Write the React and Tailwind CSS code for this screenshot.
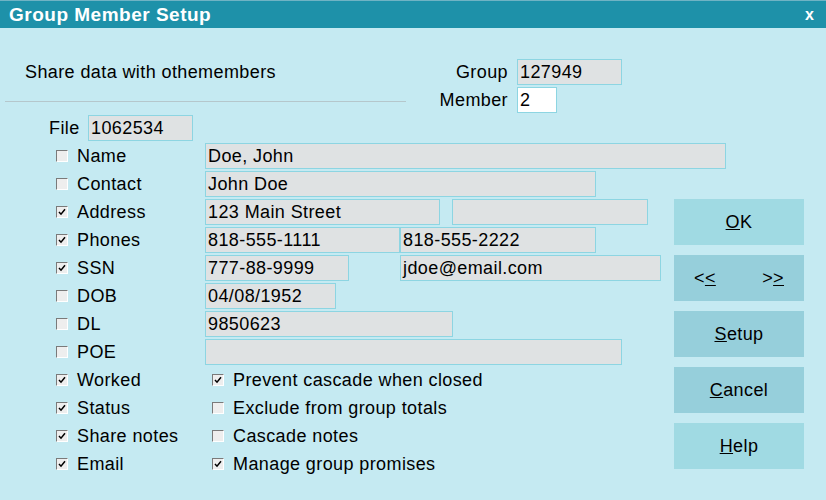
import React from "react";

const font = { fontFamily: '"Liberation Sans", Arial, sans-serif' };

function Check({ on }) {
  return (
    <span className="inline-flex items-center justify-center h-[12px] w-[12px] shrink-0 border-t border-l border-t-[#7a7a7a] border-l-[#7a7a7a] border-b border-r border-b-white border-r-white bg-[#eeeeee]">
      {on && (
        <svg width="10" height="10" viewBox="0 0 10 10">
          <path d="M2 5 L4 7.2 L8 2.2" stroke="#000" strokeWidth="1.5" fill="none" />
        </svg>
      )}
    </span>
  );
}

function Field({ w, children, className = "" }) {
  return (
    <div
      className={`h-[26px] shrink-0 border border-[#8dd5e2] bg-[#dfe2e3] pl-[2px] flex items-center text-[18px] tracking-[0.4px] text-black leading-none whitespace-nowrap ${className}`}
      style={{ width: w }}
    >
      {children}
    </div>
  );
}

function Row({ on, label, children, span }) {
  return (
    <div className={`flex h-[26px] items-center pl-[56px] ${span ? "col-span-2" : ""}`}>
      <Check on={on} />
      <span className="ml-[9px] w-[128px] shrink-0 text-[18px] tracking-[0.4px] leading-none">{label}</span>
      {children}
    </div>
  );
}

function Btn({ children, light }) {
  return (
    <div
      className={`h-[46px] w-[130px] flex items-center justify-center text-[18px] tracking-[0.4px] ${
        light ? "bg-[#a0dae3]" : "bg-[#96cfdb]"
      }`}
    >
      {children}
    </div>
  );
}

export default function App() {
  return (
    <div className="w-[826px] h-[500px] bg-[#c5eaf2] text-black overflow-hidden" style={font}>
      <div className="h-[28px] bg-[#1e91a9] border-t border-t-[#6fb3c4] flex items-center justify-between pl-[9px] pr-[12px]">
        <span className="text-white font-bold text-[19px] tracking-[0.5px] leading-none">Group Member Setup</span>
        <span className="text-white font-bold text-[16px] leading-none">x</span>
      </div>

      <div className="flex h-[87px]">
        <div className="ml-[5px] w-[401px] flex flex-col">
          <div className="pt-[35px] pl-[20px] text-[18px] tracking-[0.4px] leading-[18px]">Share data with othemembers</div>
          <div className="mt-[20px] h-px bg-[#b5c7cc]" />
        </div>
        <div className="pt-[31px] flex flex-col gap-[2px]">
          <div className="flex items-center h-[26px]">
            <span className="w-[102px] text-right text-[18px] tracking-[0.4px] leading-none">Group</span>
            <Field w={105} className="ml-[9px]">127949</Field>
          </div>
          <div className="flex items-center h-[26px]">
            <span className="w-[102px] text-right text-[18px] tracking-[0.4px] leading-none">Member</span>
            <Field w={40} className="ml-[9px] bg-white">2</Field>
          </div>
        </div>
      </div>

      <div className="grid grid-cols-[674px_130px] auto-rows-[26px] gap-y-[2px]">
        <div className="col-span-2 flex items-center h-[26px] pl-[49px]">
          <span className="w-[39px] text-[18px] tracking-[0.4px] leading-none">File</span>
          <Field w={105}>1062534</Field>
        </div>
        <Row span on={false} label="Name">
          <Field w={521}>Doe, John</Field>
        </Row>
        <Row span on={false} label="Contact">
          <Field w={391}>John Doe</Field>
        </Row>
        <Row on label="Address">
          <Field w={235}>123 Main Street</Field>
          <Field w={196} className="ml-[12px]" />
        </Row>
        <div className="col-start-2 row-start-4 row-span-10 flex flex-col gap-[10px]">
          <Btn light>
            <span><u>O</u>K</span>
          </Btn>
          <Btn>
            <div className="w-full flex justify-between px-[20px]">
              <span>&lt;<u>&lt;</u></span>
              <span>&gt;<u>&gt;</u></span>
            </div>
          </Btn>
          <Btn>
            <span><u>S</u>etup</span>
          </Btn>
          <Btn>
            <span><u>C</u>ancel</span>
          </Btn>
          <Btn light>
            <span><u>H</u>elp</span>
          </Btn>
        </div>
        <Row on label="Phones">
          <Field w={195}>818-555-1111</Field>
          <Field w={196}>818-555-2222</Field>
        </Row>
        <Row on label="SSN">
          <Field w={144}>777-88-9999</Field>
          <Field w={261} className="ml-[51px]">jdoe@email.com</Field>
        </Row>
        <Row on={false} label="DOB">
          <Field w={131}>04/08/1952</Field>
        </Row>
        <Row on={false} label="DL">
          <Field w={248}>9850623</Field>
        </Row>
        <Row on={false} label="POE">
          <Field w={417} />
        </Row>
        {[
          ["Worked", true, "Prevent cascade when closed", true],
          ["Status", true, "Exclude from group totals", false],
          ["Share notes", true, "Cascade notes", false],
          ["Email", true, "Manage group promises", true],
        ].map(([a, ao, b, bo]) => (
          <div key={a} className="flex h-[26px] items-center pl-[56px]">
            <Check on={ao} />
            <span className="ml-[9px] w-[135px] shrink-0 text-[18px] tracking-[0.4px] leading-none">{a}</span>
            <Check on={bo} />
            <span className="ml-[9px] text-[18px] tracking-[0.4px] leading-none whitespace-nowrap">{b}</span>
          </div>
        ))}
      </div>
    </div>
  );
}
